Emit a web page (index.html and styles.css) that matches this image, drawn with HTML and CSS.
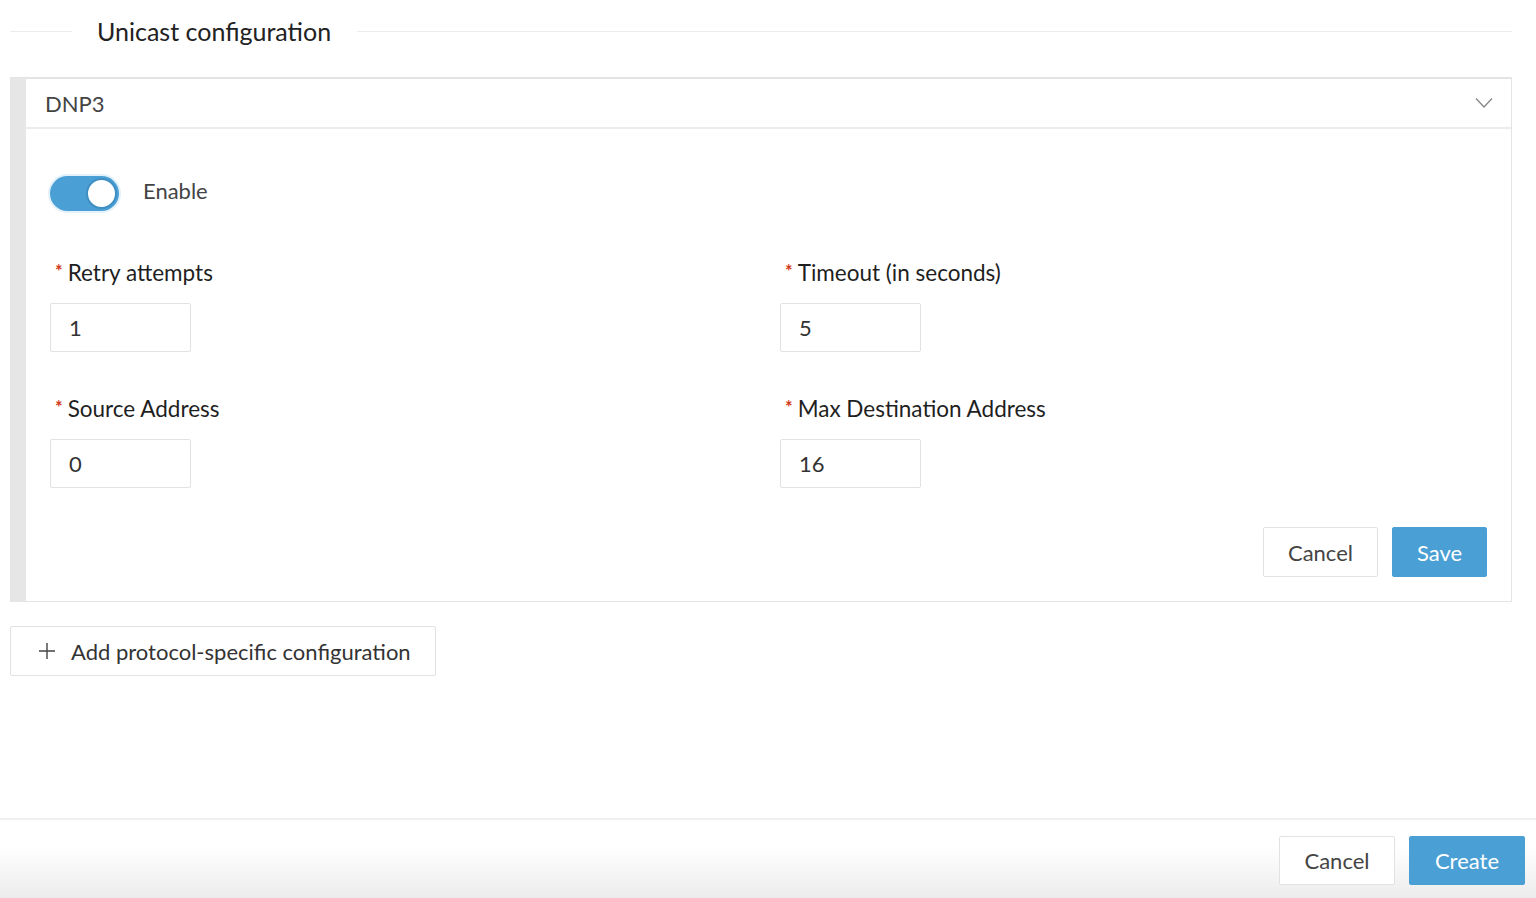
FILE: index.html
```html
<!DOCTYPE html>
<html lang="en">
<head>
    <meta charset="UTF-8">
    <title>Unicast configuration</title>
    <link rel="stylesheet" href="styles.css">
</head>
<body>
    <div class="page">
        <div class="section-title">
            <span class="line short"></span>
            <h2>Unicast configuration</h2>
            <span class="line"></span>
        </div>

        <div class="panel">
            <div class="panel-bar"></div>
            <div class="panel-body">
                <div class="panel-head">
                    <span>DNP3</span>
                    <svg class="chevron" width="18" height="12" viewBox="0 0 18 12">
                        <path d="M1 1.5 L9 10 L17 1.5" fill="none" stroke="#888" stroke-width="1.4"/>
                    </svg>
                </div>
                <div class="panel-content">
                    <div class="toggle-row">
                        <span class="toggle"><span class="knob"></span></span>
                        <span class="toggle-label">Enable</span>
                    </div>
                    <div class="fields">
                        <div class="field">
                            <label><span class="req">*</span>Retry attempts</label>
                            <input type="text" value="1">
                        </div>
                        <div class="field">
                            <label><span class="req">*</span>Timeout (in seconds)</label>
                            <input type="text" value="5">
                        </div>
                        <div class="field">
                            <label><span class="req">*</span>Source Address</label>
                            <input type="text" value="0">
                        </div>
                        <div class="field">
                            <label><span class="req">*</span>Max Destination Address</label>
                            <input type="text" value="16">
                        </div>
                    </div>
                    <div class="actions">
                        <button class="btn">Cancel</button>
                        <button class="btn primary save">Save</button>
                    </div>
                </div>
            </div>
        </div>

        <button class="btn add-btn">
            <svg width="18" height="18" viewBox="0 0 18 18">
                <path d="M9 1 V17 M1 9 H17" stroke="#444" stroke-width="1.4"/>
            </svg>
            Add protocol-specific configuration
        </button>
    </div>

    <div class="footer">
        <button class="btn">Cancel</button>
        <button class="btn primary create">Create</button>
    </div>
</body>
</html>
```

FILE: styles.css
```css
body, html {
    margin: 0;
    padding: 0;
    height: 100%;
    font-family: Lato, "Open Sans", sans-serif;
    color: #333;
    background: #fff;
    overflow: hidden;
}
body {
    display: flex;
    flex-direction: column;
}
.page {
    flex: 1;
    padding: 0 24px 0 10px;
}
.section-title {
    display: flex;
    align-items: center;
    height: 62px;
    margin-bottom: 15px;
}
.section-title h2 {
    margin: 0 26px 0 25px;
    font-size: 25px;
    font-weight: 400;
    color: #222;
}
.line {
    flex: 1;
    height: 1px;
    background: #ececec;
}
.line.short {
    flex: 0 0 62px;
}
.panel {
    display: flex;
    border: 1px solid #e4e4e4;
}
.panel-bar {
    width: 15px;
    background: #e6e6e6;
}
.panel-body {
    flex: 1;
}
.panel-head {
    display: flex;
    align-items: center;
    justify-content: space-between;
    height: 48px;
    padding: 0 18px 0 19px;
    border-top: 1px solid #e4e4e4;
    border-bottom: 2px solid #ececec;
    font-size: 22px;
    color: #444;
}
.panel-content {
    padding: 47px 24px 24px 24px;
}
.toggle-row {
    display: flex;
    align-items: center;
    gap: 24px;
}
.toggle {
    position: relative;
    width: 69px;
    height: 35px;
    border-radius: 18px;
    background: #4a9fd4;
    box-shadow: 0 0 0 2px #e3f1fa;
}
.knob {
    position: absolute;
    right: 2px;
    top: 2px;
    width: 31px;
    height: 31px;
    border-radius: 50%;
    background: #fff;
    box-sizing: border-box;
    border: 2px solid #3f8fc3;
}
.toggle-label {
    font-size: 22px;
    line-height: 26px;
    padding-bottom: 6px;
    color: #444;
}
.fields {
    display: grid;
    grid-template-columns: 730px 1fr;
    row-gap: 44px;
    margin-top: 49px;
}
.field label {
    display: block;
    height: 26px;
    font-size: 22.5px;
    color: #1f1f1f;
    margin-bottom: 17px;
    line-height: 26px;
}
.req {
    color: #d03a22;
    font-size: 18px;
    font-weight: 700;
    line-height: 0;
    vertical-align: 3px;
    margin: 0 5px 0 5px;
}
.field input {
    display: block;
    width: 141px;
    height: 49px;
    box-sizing: border-box;
    border: 1px solid #e2e2e2;
    border-radius: 2px;
    padding: 0 18px;
    font-family: inherit;
    font-size: 22px;
    color: #333;
    outline: none;
}
.actions {
    display: flex;
    justify-content: flex-end;
    gap: 14px;
    margin-top: 39px;
}
.btn {
    height: 50px;
    padding: 0 24px;
    border: 1px solid #e2e2e2;
    border-radius: 2px;
    background: #fff;
    font-family: inherit;
    font-size: 22px;
    color: #444;
    cursor: pointer;
}
.btn.primary {
    background: #4a9fd4;
    border-color: #4a9fd4;
    color: #fff;
}
.btn.save {
    width: 95px;
    padding: 0;
}
.add-btn {
    display: flex;
    align-items: center;
    gap: 15px;
    margin-top: 24px;
    padding: 0 24px 0 27px;
    color: #333;
}
.footer {
    display: flex;
    justify-content: flex-end;
    gap: 14px;
    height: 80px;
    padding: 16px 11px 0 0;
    box-sizing: border-box;
    border-top: 2px solid #f0f0f0;
    background: linear-gradient(#fff 35%, #ececec);
}
.footer .btn {
    width: 116px;
    height: 49px;
    padding: 0;
}
```
